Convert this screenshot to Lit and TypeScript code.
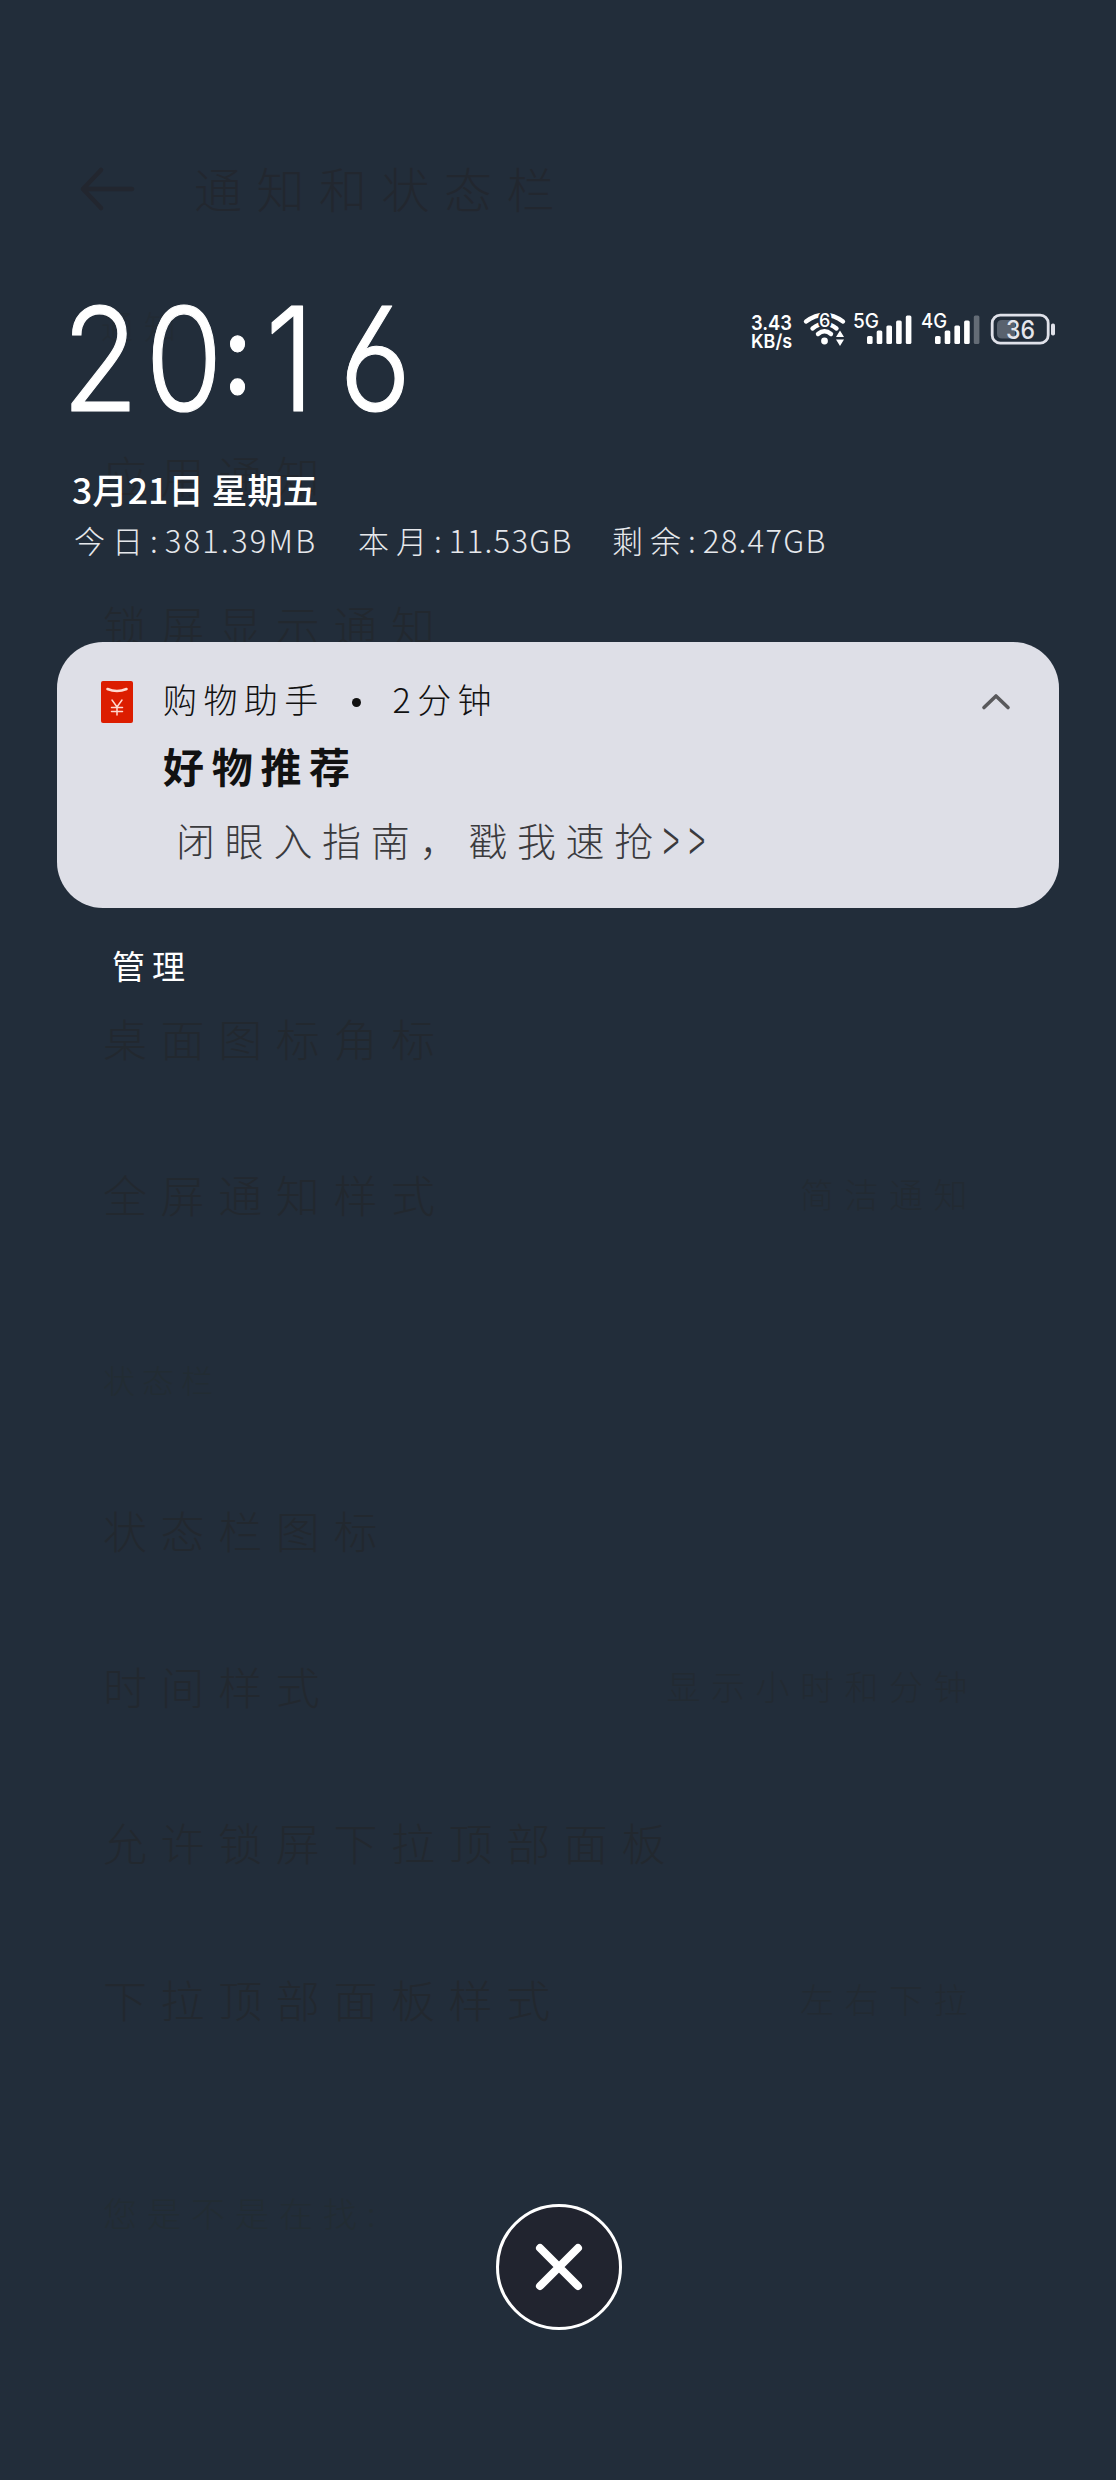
import { LitElement, html, svg, css } from "lit";
import { customElement, property } from "lit/decorators.js";

const arrowIcon = html`<svg class="arrow" width="58" height="48" viewBox="0 0 58 48">
  <path d="M22 5 L4 24 L22 43 M4 24 H53" />
</svg>`;

interface Row {
  label: string;
  value?: string;
  kind: "section" | "item" | "hint";
  height: number;
}

const rows: Row[] = [
  { label: "应用通知", kind: "item", height: 150 },
  { label: "锁屏显示通知", kind: "item", height: 413 },
  { label: "桌面图标角标", kind: "item", height: 156 },
  { label: "全屏通知样式", value: "简洁通知", kind: "item", height: 185 },
  { label: "状态栏", kind: "section", height: 151 },
  { label: "状态栏图标", kind: "item", height: 156 },
  { label: "时间样式", value: "显示小时和分钟", kind: "item", height: 156 },
  { label: "允许锁屏下拉顶部面板", kind: "item", height: 157 },
  { label: "下拉顶部面板样式", value: "左右下拉", kind: "item", height: 214 },
  { label: "您是不是在找:", kind: "hint", height: 100 },
];

@customElement("settings-backdrop")
export class SettingsBackdrop extends LitElement {
  static styles = css`
    :host {
      display: block;
      color: #22272f;
      font-family: "Noto Sans CJK SC", sans-serif;
      font-weight: 300;
      white-space: nowrap;
    }
    .title {
      display: flex;
      align-items: center;
      height: 72px;
      padding: 151px 0 0 79px;
      font-size: 48px;
      letter-spacing: 14.5px;
      line-height: 72px;
    }
    .arrow {
      margin: 4px 57px 0 0;
      fill: none;
      stroke: #22262f;
      stroke-width: 4.5;
      stroke-linecap: round;
      stroke-linejoin: round;
    }
    .name {
      height: 60px;
      margin-top: 72px;
      padding-left: 101px;
      font-size: 32px;
      letter-spacing: 11px;
      line-height: 60px;
      color: #222b34;
    }
    .list {
      padding: 87px 138px 0 103px;
    }
    .row {
      display: flex;
      justify-content: space-between;
      line-height: 66px;
      font-size: 44px;
      letter-spacing: 13.6px;
      color: #22282f;
    }
    .value {
      font-size: 34px;
      letter-spacing: 10.500px;
      color: #222a32;
    }
    .section {
      font-size: 32px;
      letter-spacing: 7px;
      color: #222c33;
    }
    .hint {
      font-size: 34px;
      letter-spacing: 10px;
      color: #222c33;
    }
  `;

  render() {
    return html`
      <div class="title">${arrowIcon}<span>通知和状态栏</span></div>
      <div class="name">通知</div>
      <div class="list">
        ${rows.map(
          (r) => html`<div class="row ${r.kind}" style="height:${r.height}px">
            <span>${r.label}</span>
            ${r.value ? html`<span class="value">${r.value}</span>` : null}
          </div>`
        )}
      </div>
    `;
  }
}

@customElement("signal-bars")
export class SignalBars extends LitElement {
  @property() network = "5G";
  @property({ type: Number }) level = 5;

  static styles = css`
    :host {
      display: block;
      height: 40px;
    }
    svg {
      display: block;
      overflow: visible;
    }
    .net {
      font: 500 20px "Inter", sans-serif;
      fill: #fff;
    }
    .bar {
      fill: #fff;
    }
    .off {
      fill: #646c76;
    }
  `;

  render() {
    const tops = [24, 18.5, 13.5, 8.5, 3.5];
    return html`<svg width="60" height="40" viewBox="0 0 60 40">
      <text class="net" x="0" y="15.500" textLength="26" lengthAdjust="spacingAndGlyphs">${this.network}</text>
      ${tops.map(
        (t, i) => svg`<rect class="bar ${i < this.level ? "" : "off"}" x=${14 + i * 9.7} y=${t} width="5.6" height=${32 - t} rx="1.5" />`
      )}
    </svg>`;
  }
}

@customElement("status-bar")
export class StatusBar extends LitElement {
  static styles = css`
    :host {
      display: flex;
      align-items: flex-start;
    }
    svg {
      display: block;
      overflow: visible;
    }
    .speed {
      width: 44px;
      height: 40px;
      font: 600 20px "Inter", sans-serif;
      fill: #fff;
    }
    .wifi {
      margin-left: 9px;
      fill: none;
      stroke: #fff;
      stroke-width: 4.4;
      stroke-linecap: round;
    }
    .solid {
      fill: #fff;
      stroke: none;
    }
    .gen {
      font: 500 18px "Inter", sans-serif;
      fill: #fff;
      stroke: #222d3a;
      stroke-width: 4;
      paint-order: stroke;
    }
    .sim {
      margin-left: 4px;
    }
    .second {
      margin-left: 8px;
    }
    .battery {
      margin-left: 8px;
    }
    .pct {
      font: 500 25px "Inter", sans-serif;
      fill: #e4e5ec;
    }
  `;

  render() {
    return html`
      <svg class="speed" viewBox="0 0 44 40">
        <text x="1" y="18" textLength="41" lengthAdjust="spacingAndGlyphs">3.43</text>
        <text x="1" y="35.500" font-size="19" textLength="41" lengthAdjust="spacingAndGlyphs">KB/s</text>
      </svg>
      <svg class="wifi" width="46" height="40" viewBox="0 0 46 40">
        <path d="M3 9.500 Q21.500 -4 40 9.500" />
        <path d="M9.500 16.500 Q21.500 7 33.500 16.500" />
        <path d="M15 22 Q21.500 16.500 28 22" />
        <circle class="solid" cx="21.500" cy="29" r="3.400" />
        <path class="solid" d="M33 25 L37 18.500 L41 25 Z M33 27.500 L37 34 L41 27.500 Z" />
        <text class="gen" x="16" y="14.500">6</text>
      </svg>
      <signal-bars class="sim" network="5G" .level=${5}></signal-bars>
      <signal-bars class="second" network="4G" .level=${4}></signal-bars>
      <svg class="battery" width="68" height="40" viewBox="0 0 68 40">
        <rect x="3.200" y="3.200" width="56" height="28" rx="8" fill="none" stroke="#e0e1e9" stroke-width="2.800" />
        <path d="M26 8 H13 Q8 8 8 13 V21.500 Q8 26.500 13 26.500 H26 Z" fill="#59626e" />
        <rect x="62" y="11.500" width="4" height="12" rx="1.800" fill="#e0e1e9" />
        <text class="pct" x="17" y="26.500" textLength="29" lengthAdjust="spacingAndGlyphs">36</text>
      </svg>
    `;
  }
}

@customElement("notification-card")
export class NotificationCard extends LitElement {
  static styles = css`
    :host {
      display: flex;
      box-sizing: border-box;
      height: 266px;
      border-radius: 46px;
      padding: 0 44px;
      background: #dedfe7;
      color: #111;
      font-family: "Noto Sans CJK SC", sans-serif;
      white-space: nowrap;
    }
    .app {
      flex: none;
      margin-top: 39px;
    }
    .content {
      flex: 1;
      padding: 31px 0 0 30px;
    }
    .head {
      display: flex;
      align-items: center;
      height: 50px;
      font-size: 34px;
      font-weight: 300;
      letter-spacing: 6.400px;
    }
    .dot {
      width: 9px;
      height: 9px;
      margin: 9px 32px 0 27px;
      border-radius: 50%;
      background: #111;
    }
    .title {
      height: 60px;
      margin-top: 12px;
      font-size: 41px;
      font-weight: 700;
      letter-spacing: 7.700px;
      line-height: 60px;
    }
    .text {
      height: 60px;
      margin-top: 14px;
      padding-left: 13px;
      font-size: 39px;
      font-weight: 300;
      letter-spacing: 9.700px;
      line-height: 60px;
      color: #3a3a3d;
    }
    .more {
      display: inline-block;
      margin-left: 0;
      transform: scale(0.78, 1.6);
      transform-origin: 0 56%;
      letter-spacing: 12px;
    }
    .fold {
      flex: none;
      margin: 45px 0 0;
    }
  `;

  render() {
    return html`
      <svg class="app" width="32" height="42" viewBox="0 0 32 42">
        <rect width="32" height="42" rx="2" fill="#dc1d00" />
        <path d="M6.500 8 Q16 12 25.500 8" fill="none" stroke="#ffd9d0" stroke-width="2.600" stroke-linecap="round" />
        <path d="M11 19 L16 26 L21 19 M16 26 V34 M10.500 26.500 H21.500 M10.500 30.500 H21.500" fill="none" stroke="#ffd9d0" stroke-width="1.500" stroke-linecap="round" />
      </svg>
      <div class="content">
        <div class="head"><span>购物助手</span><span class="dot"></span><span>2分钟</span></div>
        <div class="title">好物推荐</div>
        <div class="text">闭眼入指南，戳我速抢<span class="more">&gt;&gt;</span></div>
      </div>
      <svg class="fold" width="38" height="30" viewBox="0 0 38 30">
        <path d="M7 20.500 L19 9 L31 20.500" fill="none" stroke="#59595c" stroke-width="3.600" stroke-linecap="round" stroke-linejoin="round" />
      </svg>
    `;
  }
}

@customElement("app-root")
export class AppRoot extends LitElement {
  static styles = css`
    :host {
      display: grid;
      grid-template: 2480px / 1116px;
      overflow: hidden;
      background: #222d3a;
    }
    .backdrop,
    .shade {
      grid-area: 1 / 1;
    }
    .backdrop {
      overflow: hidden;
    }
    .shade {
      z-index: 1;
      display: flex;
      flex-direction: column;
      font-family: "Noto Sans CJK SC", sans-serif;
      white-space: nowrap;
      color: #fff;
    }
    .top {
      display: flex;
      justify-content: space-between;
      height: 164px;
      padding: 296px 59px 0 60px;
    }
    .clock {
      display: block;
      overflow: visible;
      font: 300 144px "Inter", sans-serif;
      font-feature-settings: "cv03", "ss01", "case";
      fill: #fff;
      stroke: #fff;
      stroke-width: 1.2;
      stroke-linejoin: round;
    }
    .colon {
      font-size: 112px;
      font-weight: 500;
    }
    .status {
      margin-top: 16px;
    }
    .date {
      height: 50px;
      margin-top: 4px;
      padding-left: 72px;
      font-size: 35.500px;
      font-weight: 500;
      line-height: 50px;
    }
    .usage {
      display: flex;
      height: 44px;
      margin-top: 4px;
      padding-left: 74px;
      font-size: 31px;
      font-weight: 300;
      line-height: 44px;
      color: #e6e8ec;
    }
    .stat {
      box-sizing: border-box;
      width: 284px;
    }
    .stat + .stat {
      width: 254px;
    }
    .key {
      letter-spacing: 7px;
    }
    .num {
      letter-spacing: 1.300px;
    }
    .stat:first-child .num {
      letter-spacing: 2.200px;
    }
    .card {
      margin: 80px 57px 0;
    }
    .manage {
      height: 50px;
      margin-top: 32px;
      padding-left: 112px;
      font-size: 33px;
      line-height: 50px;
      letter-spacing: 7px;
    }
    .close {
      display: flex;
      align-self: center;
      box-sizing: border-box;
      width: 126px;
      height: 126px;
      margin: auto 0 150px 2px;
      border: 3px solid #fff;
      border-radius: 50%;
      background: #21242f;
      align-items: center;
      justify-content: center;
    }
    .cross {
      stroke: #fff;
      stroke-width: 8;
      stroke-linecap: round;
    }
  `;

  render() {
    const usage = [
      ["今日:", "381.39MB"],
      ["本月:", "11.53GB"],
      ["剩余:", "28.47GB"],
    ];
    return html`
      <settings-backdrop class="backdrop"></settings-backdrop>
      <main class="shade">
        <div class="top">
          <svg class="clock" width="370" height="140" viewBox="0 0 370 140">
            <text transform="scale(0.87 1)" x="2" y="114.500">2<tspan x="98">0</tspan><tspan class="colon" x="187" dy="-4">:</tspan><tspan x="236" dy="4">1</tspan><tspan x="321">6</tspan></text>
          </svg>
          <status-bar class="status"></status-bar>
        </div>
        <div class="date">3月21日 星期五</div>
        <div class="usage">
          ${usage.map(
            ([k, v]) => html`<div class="stat"><span class="key">${k}</span><span class="num">${v}</span></div>`
          )}
        </div>
        <notification-card class="card"></notification-card>
        <div class="manage">管理</div>
        <div class="close">
          <svg width="50" height="50" viewBox="0 0 50 50">
            <path class="cross" d="M6 6 L44 44 M44 6 L6 44" />
          </svg>
        </div>
      </main>
    `;
  }
}
